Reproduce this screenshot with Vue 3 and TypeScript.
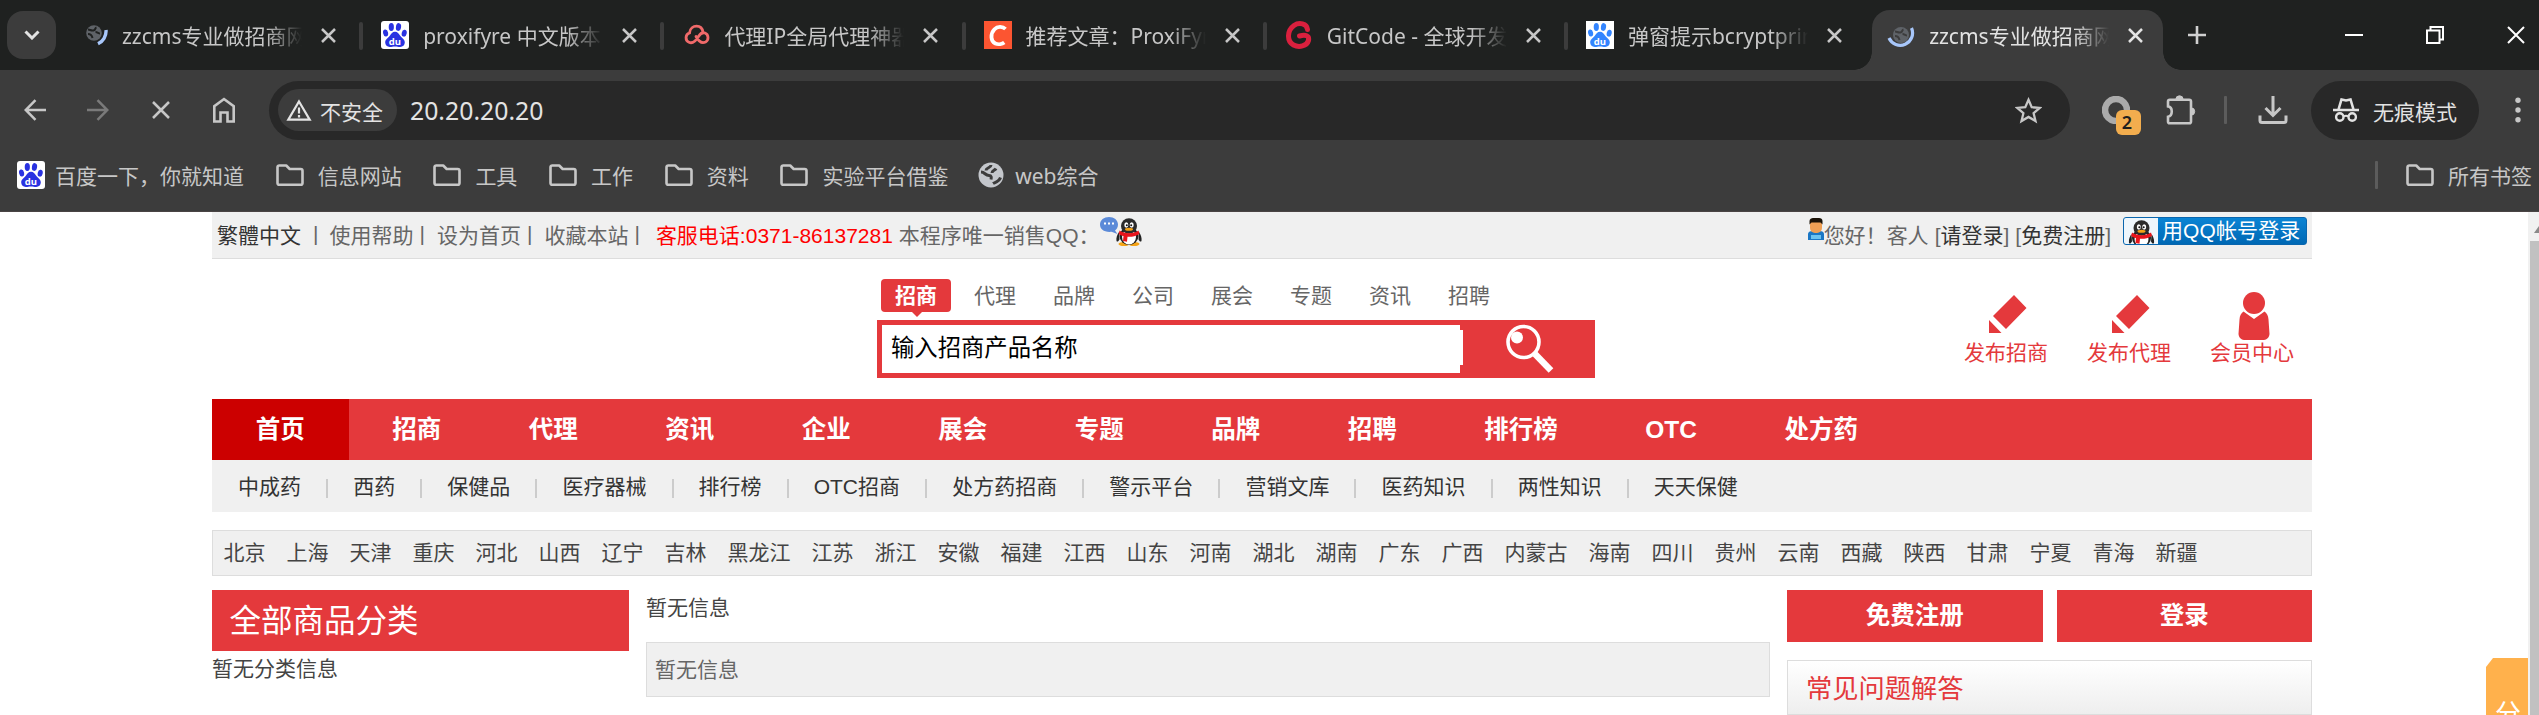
<script setup lang="ts">
interface Tab {
  title: string
  icon: 'loading' | 'baidu' | 'cloud' | 'csdn' | 'gitcode' | 'baidulight' | 'spinner'
  active?: boolean
}

const tabs: Tab[] = [
  { title: 'zzcms专业做招商网', icon: 'loading' },
  { title: 'proxifyre 中文版本', icon: 'baidu' },
  { title: '代理IP全局代理神器', icon: 'cloud' },
  { title: '推荐文章：ProxiFyre', icon: 'csdn' },
  { title: 'GitCode - 全球开发', icon: 'gitcode' },
  { title: '弹窗提示bcryptprim', icon: 'baidulight' },
  { title: 'zzcms专业做招商网', icon: 'spinner', active: true },
]

const folders: string[] = ['信息网站', '工具', '工作', '资料', '实验平台借鉴']
const searchTabs: string[] = ['招商', '代理', '品牌', '公司', '展会', '专题', '资讯', '招聘']
const nav: string[] = ['首页', '招商', '代理', '资讯', '企业', '展会', '专题', '品牌', '招聘', '排行榜', 'OTC', '处方药']
const subNav: string[] = ['中成药', '西药', '保健品', '医疗器械', '排行榜', 'OTC招商', '处方药招商', '警示平台', '营销文库', '医药知识', '两性知识', '天天保健']
const areas: string[] = [
  '北京', '上海', '天津', '重庆', '河北', '山西', '辽宁', '吉林', '黑龙江', '江苏', '浙江', '安徽', '福建', '江西', '山东', '河南',
  '湖北', '湖南', '广东', '广西', '内蒙古', '海南', '四川', '贵州', '云南', '西藏', '陕西', '甘肃', '宁夏', '青海', '新疆',
]
</script>

<template>
  <div class="window">
    <svg class="defs" width="0" height="0">
      <defs>
        <symbol id="paw" viewBox="0 0 28 28">
          <ellipse cx="4.6" cy="12" rx="2.5" ry="3.5" transform="rotate(-12 4.6 12)" />
          <ellipse cx="10.3" cy="6" rx="2.6" ry="3.9" />
          <ellipse cx="17.5" cy="6" rx="2.6" ry="3.9" transform="rotate(8 17.5 6)" />
          <ellipse cx="23.2" cy="12.2" rx="2.5" ry="3.5" transform="rotate(12 23.2 12.2)" />
          <path d="M14 10.8c2.6 0 3.7 2 5.2 4s4.6 3.4 4.6 6.800c0 2.700-2 4.400-4.600 4.400-2 0-3-.6-5.200-.6s-3.200.6-5.200.6c-2.600 0-4.600-1.700-4.600-4.400 0-3.400 3.100-4.800 4.600-6.800s2.600-4 5.200-4z" />
          <text x="13.9" y="23.600" text-anchor="middle" font-family="Open Sans, sans-serif" font-weight="700" font-size="9.500" fill="#fff">du</text>
        </symbol>
        <symbol id="folder" viewBox="0 0 30 24">
          <path d="M2.500 20V4.200c0-1 .7-1.700 1.700-1.700h7l3.500 3.500h11c1 0 1.800.8 1.800 1.800V20c0 1-.8 1.800-1.800 1.800H4.200c-1 0-1.700-.8-1.700-1.800z" fill="none" stroke="#c7c7c7" stroke-width="2.600" stroke-linejoin="round" />
        </symbol>
        <symbol id="pencil" viewBox="0 0 38 39">
          <path d="M25 0 37.500 13 17 34 4 21zM0 25 12.500 38H0z" />
        </symbol>
        <symbol id="penguin" viewBox="0 0 26 28">
          <path d="M3 14c-2 3-3 6-2.500 9 1 1.500 2 0 3-1.500zM23 14c2 3 3 6 2.500 9-1 1.500-2 0-3-1.500z" fill="#222" />
          <ellipse cx="8" cy="26" rx="5.500" ry="2" fill="#f5a316" />
          <ellipse cx="18" cy="26" rx="5.500" ry="2" fill="#f5a316" />
          <ellipse cx="13" cy="18" rx="9.500" ry="9" fill="#222" />
          <ellipse cx="13" cy="19" rx="7" ry="7.500" fill="#fff" />
          <ellipse cx="13" cy="8" rx="8" ry="7.800" fill="#2b2b2b" />
          <ellipse cx="10.300" cy="7" rx="2" ry="2.700" fill="#fff" />
          <ellipse cx="15.700" cy="7" rx="2" ry="2.700" fill="#fff" />
          <circle cx="10.800" cy="7.300" r="1" fill="#111" />
          <circle cx="15.200" cy="7.300" r="1" fill="#111" />
          <ellipse cx="13" cy="11.200" rx="4" ry="1.500" fill="#f5a316" />
          <path d="M3.500 12.500c5 3.500 14 3.500 19 0l1 3.500c-4 2.500-8 3-12 2.800l-.5 5-4-.8.500-5c-2-.4-3.500-1-4.800-2z" fill="#e8141b" />
        </symbol>
      </defs>
    </svg>

    <header class="chrome">
      <div class="tabstrip">
        <div class="tab-search">
          <svg width="16" height="10" viewBox="0 0 16 10"><path d="M1.500 1.500 8 8l6.500-6.500" fill="none" stroke="#e3e3e3" stroke-width="3" /></svg>
        </div>
        <div v-for="(tab, i) in tabs" :key="i" class="tab" :class="{ active: tab.active, plain: i === 5 }">
          <svg class="favicon" width="28" height="28" viewBox="0 0 28 28">
            <template v-if="tab.icon === 'loading'">
              <circle cx="14" cy="12" r="7.800" fill="#5f6368" />
              <path d="M8 8.500c2 0 3 1.500 5.500 1s1-2.500 3-3M8 13c3 0 4 1.500 4.500 4M15.500 11c2 0 3 1.500 4.500 1.500" fill="none" stroke="#1f2120" stroke-width="2" />
              <path d="M26 9c.5 6-3 11.500-8 13.800" fill="none" stroke="#a8c7fa" stroke-width="3.400" />
            </template>
            <template v-else-if="tab.icon === 'baidu'">
              <rect width="28" height="28" rx="3" fill="#fff" />
              <use href="#paw" fill="#2932e1" />
            </template>
            <template v-else-if="tab.icon === 'cloud'">
              <path d="M14 15.500c3 5.500 6.500 7 9.500 5.500 3.500-2 3.300-7.500-.5-9-2.500-.8-4.500.3-6.500 3.500-3 5-6 7.300-9.500 5.800-4-1.800-4-8 .5-9.300.5-5 4-6.800 7-6.800 3.500 0 6 2.500 6.500 6" fill="none" stroke="#f06a6a" stroke-width="2.800" stroke-linecap="round" />
            </template>
            <template v-else-if="tab.icon === 'csdn'">
              <rect width="28" height="28" fill="#fc5531" />
              <path d="M21.500 8c-2.500-2.500-8-3-11 .2-4.500 4.600-3.800 12.300.8 14.300 3 1.300 7 .5 9-1" fill="none" stroke="#fff" stroke-width="3.800" />
            </template>
            <template v-else-if="tab.icon === 'gitcode'">
              <path d="M22.500 8.500C22 2.500 14 1 9 4.500 2 9.500 1.500 20 8.500 24c5.500 3 13.500 1 15-4.500 1-5-3-6-9-4.500" fill="none" stroke="#da203e" stroke-width="5" stroke-linecap="round" />
            </template>
            <template v-else-if="tab.icon === 'baidulight'">
              <rect width="28" height="28" fill="#fff" />
              <use href="#paw" fill="#3385ff" />
            </template>
            <template v-else>
              <circle cx="14" cy="14" r="8" fill="#5f6368" />
              <path d="M8 10.500c2 0 3 1.500 5.500 1s1-2.500 3-3M8 15c3 0 4 1.500 4.500 4M15.500 13c2 0 3 1.500 4.500 1.500" fill="none" stroke="#3c3c3c" stroke-width="2" />
              <path d="M24.500 7A12.200 12.200 0 1 1 2 17" fill="none" stroke="#a8c7fa" stroke-width="3.200" />
            </template>
          </svg>
          <span class="tab-title">{{ tab.title }}</span>
          <svg class="tab-close" width="15" height="15" viewBox="0 0 15 15"><path d="m1 1 13 13M14 1 1 14" fill="none" stroke="currentColor" stroke-width="2.500" /></svg>
        </div>
        <svg class="new-tab" width="18" height="18" viewBox="0 0 18 18"><path d="M9 0v18M0 9h18" stroke="#d0d0d0" stroke-width="2.600" /></svg>
        <div class="window-controls">
          <svg width="18" height="20" viewBox="0 0 18 20"><path d="M0 10h18" stroke="#fff" stroke-width="2" /></svg>
          <svg width="18" height="20" viewBox="0 0 18 20"><path d="M1 5.500h12.500V18H1zM4.500 5V2H17v12.500h-3" fill="none" stroke="#fff" stroke-width="2" /></svg>
          <svg width="18" height="20" viewBox="0 0 18 20"><path d="m1 2 16 16M17 2 1 18" fill="none" stroke="#fff" stroke-width="2" /></svg>
        </div>
      </div>

      <div class="toolbar">
        <svg class="back" width="22" height="22" viewBox="0 0 22 22"><path d="M22 11H2M11.500 1.200 1.700 11l9.800 9.800" fill="none" stroke="#c7c7c7" stroke-width="2.500" /></svg>
        <svg class="forward" width="22" height="22" viewBox="0 0 22 22"><path d="M0 11h20M10.500 1.200 20.300 11l-9.800 9.800" fill="none" stroke="#7a7a7a" stroke-width="2.500" /></svg>
        <svg class="stop" width="18" height="18" viewBox="0 0 18 18"><path d="m1 1 16 16M17 1 1 17" fill="none" stroke="#c7c7c7" stroke-width="2.500" /></svg>
        <svg class="home" width="22" height="26" viewBox="0 0 22 26"><path d="M1.300 24.500V9.200L11 2l9.700 7.200v15.300h-6.200v-9h-7v9z" fill="none" stroke="#c7c7c7" stroke-width="2.600" /></svg>
        <div class="omnibox">
          <div class="chip">
            <svg width="26" height="22" viewBox="0 0 26 22"><path d="M13 2.500 23.700 20.700H2.300z" fill="none" stroke="#e3e3e3" stroke-width="2.200" /><path d="M13 8.500v6M13 16v2.400" stroke="#e3e3e3" stroke-width="2.200" /></svg>
            <span>不安全</span>
          </div>
          <span class="url">20.20.20.20</span>
          <svg class="star" width="27" height="27" viewBox="0 0 27 27"><path d="m13.500 2.800 3.200 7.400 8 .7-6.100 5.300 1.900 7.900-7-4.200-7 4.200 1.900-7.900-6.100-5.300 8-.7z" fill="none" stroke="#c7c7c7" stroke-width="2.300" /></svg>
        </div>
        <div class="extension">
          <svg width="28" height="28" viewBox="0 0 28 28"><path d="M25 14A11 11 0 1 0 14 25" fill="none" stroke="#ababab" stroke-width="6.500" /></svg>
          <span class="badge">2</span>
        </div>
        <svg class="puzzle" width="30" height="30" viewBox="0 0 30 30">
          <path d="M2 6.500c0-1 .8-1.800 1.800-1.800h19.400c1 0 1.800.8 1.800 1.800v20c0 1-.8 1.800-1.800 1.800H3.800c-1 0-1.800-.8-1.800-1.800v-4.700c5-.6 5-9.800 0-10.400z" fill="none" stroke="#c7c7c7" stroke-width="2.600" />
          <path d="M9.800 4.500a3.700 3.700 0 0 1 7.400 0zM25 12.800a3.700 3.700 0 0 1 0 7.400z" fill="#c7c7c7" stroke="#c7c7c7" />
        </svg>
        <i class="divider"></i>
        <svg class="download" width="30" height="28" viewBox="0 0 30 28"><path d="M15 0v19M7.500 12l7.500 7.500 7.500-7.500M2 19.500v5c0 1.200.8 2 2 2h22c1.200 0 2-.8 2-2v-5" fill="none" stroke="#c7c7c7" stroke-width="3" /></svg>
        <div class="incognito">
          <svg width="26" height="24" viewBox="0 0 26 24">
            <path d="M0 12h26M5.500 11.500 8.500 1.500l4.500 1 4.500-1 3 10" fill="none" stroke="#e3e3e3" stroke-width="2.600" />
            <circle cx="6.800" cy="19" r="3.700" fill="none" stroke="#e3e3e3" stroke-width="2.400" />
            <circle cx="19.200" cy="19" r="3.700" fill="none" stroke="#e3e3e3" stroke-width="2.400" />
            <path d="M10.500 18.500q2.500-1.400 5 0" fill="none" stroke="#e3e3e3" stroke-width="2" />
          </svg>
          <span>无痕模式</span>
        </div>
        <svg class="menu" width="6" height="26" viewBox="0 0 6 26"><circle cx="3" cy="3.300" r="2.700" fill="#c7c7c7" /><circle cx="3" cy="13" r="2.700" fill="#c7c7c7" /><circle cx="3" cy="22.700" r="2.700" fill="#c7c7c7" /></svg>
      </div>

      <div class="bookmarks">
        <span class="bookmark home-mark">
          <svg width="28" height="28" viewBox="0 0 28 28"><rect width="28" height="28" rx="3" fill="#fff" /><use href="#paw" fill="#2932e1" /></svg>
          百度一下，你就知道
        </span>
        <span v-for="f in folders" :key="f" class="bookmark">
          <svg width="30" height="24"><use href="#folder" /></svg>{{ f }}
        </span>
        <span class="bookmark web-mark">
          <svg width="26" height="26" viewBox="0 0 26 26">
            <circle cx="13" cy="13" r="12.500" fill="#c4c7cc" />
            <path d="M3 10c4 0 4 3.500 8 3.500 2.500 0 2.500 2 2 4M13 3c0 3-5 2.500-5 5.500M14 11c0-2.500 3-2.500 4-4.500M15 21.500c1.500-1 6-1.500 7.500-6" fill="none" stroke="#3c3c3c" stroke-width="3" />
          </svg>web综合
        </span>
        <i class="divider"></i>
        <span class="bookmark all-marks">
          <svg width="30" height="24"><use href="#folder" /></svg>所有书签
        </span>
      </div>
    </header>

    <div class="viewport">
      <main class="page">
        <div class="topbar">
          <div class="top-left">
            <a class="dark">繁體中文</a><i class="b1">|</i><a>使用帮助</a><i class="b2">|</i><a>设为首页</a><i class="b2">|</i><a>收藏本站</a><i class="b3">|</i>
            <span class="phone">客服电话:0371-86137281</span>
            <span class="sale">本程序唯一销售QQ：</span>
            <svg class="qq" width="42" height="29" viewBox="0 0 42 29">
              <path d="M9 0c5 0 9 3 9 7.500 0 3-1.500 5-3 6l2.500 3.500-6-2.200C4 15.500 0 12 0 7.500 0 3 4 0 9 0z" fill="#5b8ad8" />
              <path d="M4 6.500h2M8 6.500h2M12 6.500h2" stroke="#fff" stroke-width="2" />
              <use href="#penguin" x="16" y="1" width="26" height="28" />
            </svg>
          </div>
          <div class="top-right">
            <svg class="user" width="16" height="22" viewBox="0 0 16 22">
              <path d="M0 22v-6c0-2 2-3 4-3h8c2 0 4 1 4 3v6z" fill="#1b77c5" />
              <path d="M3 21v-4h10v4z" fill="#6cc3f0" />
              <rect x="2" y="1" width="12" height="14" rx="5" fill="#f0a055" />
              <path d="M1.500 6.500V3c0-2 2-3 3.500-3h6c2 0 3.500 1 3.500 3v3.500l-2-2h-9z" fill="#1b1208" />
            </svg>
            <span class="hello">您好！</span><span class="guest">客人</span>
            <span class="bracket">[<a class="dark">请登录</a>]</span>
            <span class="bracket">[<a class="dark">免费注册</a>]</span>
            <span class="qq-login">
              <span class="qq-face"><svg width="27" height="24" viewBox="0 0 26 24"><use href="#penguin" x="0" y="0" width="26" height="28" /></svg></span>
              <span class="qq-label">用QQ帐号登录</span>
            </span>
          </div>
        </div>

        <div class="masthead">
          <div class="search">
            <div class="search-tabs">
              <span v-for="(s, i) in searchTabs" :key="s" class="search-tab" :class="{ current: i === 0 }">{{ s }}</span>
            </div>
            <div class="search-box">
              <div class="search-input">输入招商产品名称</div>
              <i class="input-edge"></i>
              <svg class="magnifier" width="50" height="50" viewBox="0 0 50 50">
                <circle cx="18.500" cy="18" r="15.500" fill="none" stroke="#fff" stroke-width="3.600" />
                <circle cx="12" cy="13.500" r="6" fill="#fff" />
                <path d="m30 30 16 16.500" stroke="#fff" stroke-width="6.500" />
              </svg>
            </div>
          </div>
          <div class="shortcuts">
            <div class="shortcut"><svg width="38" height="39"><use href="#pencil" fill="#e4393c" /></svg><span>发布招商</span></div>
            <div class="shortcut"><svg width="38" height="39"><use href="#pencil" fill="#e4393c" /></svg><span>发布代理</span></div>
            <div class="shortcut member">
              <svg width="32" height="49" viewBox="0 0 32 49"><circle cx="16" cy="11" r="11" fill="#e4393c" /><path d="M5.500 19.500 16 27l10.500-7.500c2.500 2 3.700 4 4 8L31.500 42c-.5 4-3 6-7 6h-17c-4 0-6.500-2-7-6L1.500 27.500c.3-4 1.500-6 4-8z" fill="#e4393c" /></svg>
              <span>会员中心</span>
            </div>
          </div>
        </div>

        <nav class="nav"><a v-for="(n, i) in nav" :key="n" :class="{ on: i === 0 }">{{ n }}</a></nav>
        <div class="subnav"><a v-for="s in subNav" :key="s">{{ s }}</a></div>
        <div class="areas"><a v-for="a in areas" :key="a">{{ a }}</a></div>

        <div class="columns">
          <section class="col-left">
            <h2>全部商品分类</h2>
            <p>暂无分类信息</p>
          </section>
          <section class="col-main">
            <p>暂无信息</p>
            <div class="notice">暂无信息</div>
          </section>
          <section class="col-right">
            <div class="buttons"><a>免费注册</a><a>登录</a></div>
            <h3>常见问题解答</h3>
          </section>
        </div>
      </main>
      <aside class="share">分</aside>
      <div class="scrollbar">
        <svg width="11" height="29" viewBox="0 0 11 29"><path d="M6 21 11 14v7z" fill="#8a8a8a" /></svg>
        <i class="thumb"></i>
      </div>
    </div>
  </div>
</template>

<style>
body { margin: 0; background: #fff; }
</style>

<style scoped>
* { box-sizing: border-box; }
.window {
  width: 2539px; height: 715px; overflow: hidden; background: #fff;
  font-family: "Liberation Sans", "Noto Sans CJK SC", sans-serif; font-size: 21px; white-space: nowrap;
}
.defs { position: absolute; }
svg { display: block; flex: none; }
i { font-style: normal; }

.chrome { height: 212px; background: #3c3c3c; border-bottom: 1px solid #4a4444; font-family: "Noto Sans", "Noto Sans CJK SC", sans-serif; color: #c7c7c7; }
.tabstrip { height: 70px; background: #1f2120; display: flex; align-items: center; }
.tab-search { width: 49px; height: 48px; margin-left: 7px; border-radius: 16px; background: #3c3c3c; display: flex; align-items: center; justify-content: center; flex: none; }
.tab { width: 301.200px; height: 70px; padding-left: 19px; display: flex; align-items: center; flex: none; position: relative; color: #c7c7c7; }
.tab-search + .tab { margin-left: 5px; }
.favicon { margin-right: 14px; }
.tab-title { width: 180px; overflow: hidden; line-height: 40px; margin-top: 1px; mask-image: linear-gradient(90deg, #000 80%, transparent 100%); }
.tab-close { margin-left: 19px; }
.tab::after { content: ""; position: absolute; right: -1px; top: 22px; width: 4px; height: 28px; border-radius: 2px; background: #3c3c3c; }
.tab.plain::after, .tab.active::after { display: none; }
.tab.active { color: #e3e3e3; z-index: 1; }
.tab.active::before {
  content: ""; position: absolute; z-index: -1; left: 4px; top: 10px; width: 291px; height: 60px; background: #3c3c3c; border-radius: 18px 18px 0 0;
}
.tab.active::after {
  display: block; z-index: -1; left: -14px; right: auto; top: 52px; width: 327px; height: 18px; border-radius: 0;
  background:
    radial-gradient(circle at 0 0, transparent 17.500px, #3c3c3c 18px) left / 18px 18px no-repeat,
    radial-gradient(circle at 100% 0, transparent 17.500px, #3c3c3c 18px) right / 18px 18px no-repeat;
}
.new-tab { margin-left: 19px; }
.window-controls { margin-left: auto; margin-right: 14px; display: flex; gap: 63px; }

.toolbar { height: 80px; display: flex; align-items: center; }
.back { margin-left: 24px; }
.forward { margin-left: 41px; }
.stop { margin-left: 43px; }
.home { margin-left: 43px; }
.omnibox { margin-left: 34px; width: 1801px; height: 59px; border-radius: 30px; background: #282828; display: flex; align-items: center; padding: 0 28px 0 9px; flex: none; }
.chip { width: 119px; height: 42px; border-radius: 21px; background: #3c3c3c; color: #e3e3e3; display: flex; align-items: center; padding-left: 8px; }
.chip span { margin-left: 8px; margin-top: 2px; }
.url { color: #e3e3e3; font-size: 24.800px; margin-left: 13px; }
.star { margin-left: auto; }
.extension { position: relative; margin-left: 32px; }
.badge { position: absolute; left: 14px; top: 14px; width: 25px; height: 25px; border-radius: 6px; background: #f2ad4e; color: #1f1f1f; font-weight: 600; font-size: 18px; line-height: 25px; text-align: center; padding-right: 3px; }
.puzzle { margin-left: 36px; }
.divider { width: 3px; height: 28px; background: #5c5c5c; border-radius: 1px; flex: none; }
.toolbar .divider { margin-left: 28px; }
.download { margin-left: 31px; }
.incognito { margin-left: 23px; width: 168px; height: 59px; border-radius: 30px; background: #282828; color: #e3e3e3; display: flex; align-items: center; padding-left: 22px; flex: none; }
.incognito span { margin-left: 14px; margin-top: 2px; }
.menu { margin-left: 36px; }

.bookmarks { height: 50px; display: flex; align-items: center; padding-left: 17px; }
.bookmark { display: flex; align-items: center; margin-right: 30.700px; }
.bookmark svg { margin-right: 13px; }
.home-mark svg { margin-right: 10px; }
.web-mark { margin-left: -1px; }
.web-mark svg { margin-right: 11px; }
.bookmarks .divider { margin-left: auto; margin-right: 27px; }
.all-marks { margin-right: 7px; }

.viewport { height: 503px; position: relative; display: flex; justify-content: space-between; }
.page { width: 2100px; margin-left: 212px; flex: none; }
.topbar { height: 47px; background: #f0f0f0; border-bottom: 1px solid #ddd; color: #666; display: flex; justify-content: space-between; padding: 0 5px; }
.top-left, .top-right { display: flex; align-items: center; height: 43px; }
.dark { color: #333; }
.b1 { margin: 0 11px 0 12px; }
.b2 { margin: 0 12px 0 6px; }
.b3 { margin: 0 16px 0 6px; }
.phone { color: #f00; }
.sale { margin-left: 6px; width: 201px; }
.qq { margin-top: -5px; }
.user { margin-top: -9px; }
.hello { width: 63px; }
.guest { margin-right: 6px; }
.bracket { margin-right: 6px; }
.qq-login { width: 184px; height: 28px; margin: -5px 0 0 6px; border-radius: 3px; background: linear-gradient(#0b84d4, #0068b4); border: 1px solid #0a66ae; display: flex; align-items: center; overflow: hidden; }
.qq-face { width: 34px; height: 26px; background: #eef6fc; display: flex; justify-content: center; align-items: end; flex: none; }
.qq-label { color: #fff; margin-left: 4px; line-height: 26px; letter-spacing: 0.100px; }

.masthead { height: 140px; display: flex; position: relative; }
.search { margin-left: 665px; width: 718px; padding-top: 20px; }
.search-tabs { display: flex; padding-left: 4px; gap: 9px; height: 41px; }
.search-tab { width: 70px; height: 33px; line-height: 33px; text-align: center; color: #666; position: relative; }
.search-tab.current { background: #e4393c; color: #fff; font-weight: 700; border-radius: 4px; }
.search-tab.current::after { content: ""; position: absolute; left: 30px; top: 32px; border: 6px solid transparent; border-top-color: #e4393c; border-bottom: 0; }
.search-box { height: 58px; background: #e4393c; display: flex; align-items: center; padding-left: 5px; }
.search-input { width: 578px; height: 48px; line-height: 47px; background: #fff; padding-left: 9px; font-size: 23.330px; color: #000; }
.input-edge { width: 3px; height: 35px; background: #fff; margin-top: -3px; }
.magnifier { margin-left: 42px; }
.shortcuts { margin-left: auto; display: flex; gap: 38px; padding: 33px 18px 0 0; color: #e4393c; }
.shortcut { width: 84px; display: flex; flex-direction: column; align-items: center; padding-top: 3px; }
.shortcut svg { margin-left: 3px; }
.shortcut span { line-height: 24px; margin-top: 7px; }
.shortcut + .shortcut { margin-left: 1px; }
.member { padding-top: 0; }
.member span { margin-top: 0; }

.nav { height: 61px; background: #e4393c; display: flex; }
.nav a { padding: 0 43.750px; line-height: 62px; font-size: 24.500px; font-weight: 700; color: #fff; }
.nav a.on { background: #c00; height: 61px; }
.subnav { height: 52px; background: #f0f0f0; display: flex; color: #333; }
.subnav a { padding: 0 26.070px; line-height: 53px; position: relative; }
.subnav a:not(:last-child)::after { content: ""; position: absolute; right: -1px; top: 19px; width: 2px; height: 19px; background: #ccc; }
.areas { margin-top: 18px; height: 46px; border: 1px solid #ddd; background: #f0f0f0; color: #444; display: flex; gap: 21px; padding-left: 10.500px; line-height: 44px; }
.columns { margin-top: 14px; display: flex; }
.col-left { width: 417px; }
h2, h3, p { margin: 0; font-weight: 400; }
h2 { height: 61px; line-height: 62px; background: #e4393c; color: #fff; font-size: 31.500px; padding-left: 17.500px; }
p { color: #444; line-height: 35px; }
.col-main { width: 1124px; margin-left: 17px; }
.notice { margin-top: 17px; height: 55px; border: 1px solid #ddd; background: #f0f0f0; padding-left: 8px; line-height: 54px; color: #666; }
.col-right { width: 525px; margin-left: 17px; }
.buttons { display: flex; gap: 14px; }
.buttons a { flex: 1; height: 52px; line-height: 52px; background: #e4393c; color: #fff; font-size: 24.500px; font-weight: 700; text-align: center; }
h3 { margin-top: 18px; height: 55px; line-height: 56px; border: 1px solid #ddd; background: linear-gradient(#fff, #eee); padding-left: 18px; font-size: 26.250px; color: #e4393c; }
.share { position: absolute; left: 2486px; top: 446px; width: 42px; height: 57px; background: #ffb14c; color: #fff; clip-path: polygon(7px 0, 100% 0, 100% 100%, 0 100%, 0 9px); padding: 38px 0 0 9px; font-size: 26px; line-height: 36px; overflow: hidden; }
.scrollbar { width: 11px; height: 503px; background: #f1f1f1; padding-left: 2px; }
.scrollbar svg { margin-left: -2px; }
.thumb { display: block; height: 474px; background: #c1c1c1; }
</style>
